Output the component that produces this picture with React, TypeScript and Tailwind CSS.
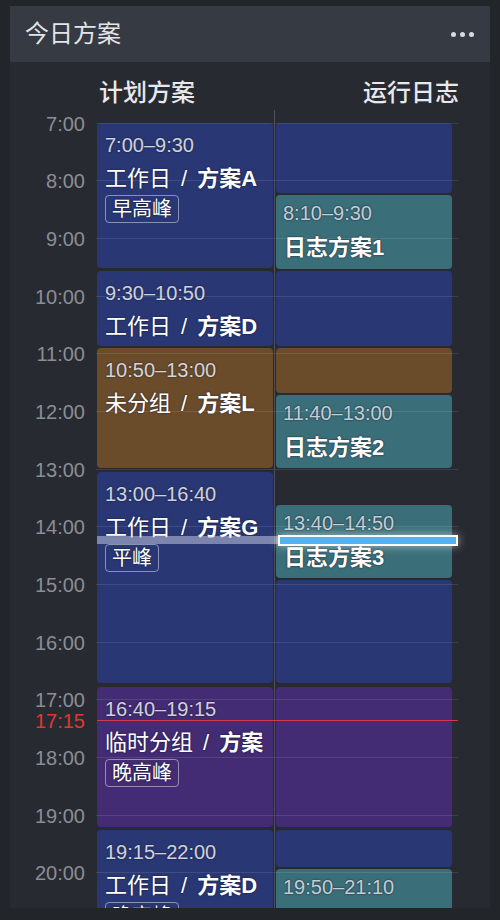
import React from 'react';

const HOUR = 57.67;
const OFFSET = 12.7;

const hours = [7, 8, 9, 10, 11, 12, 13, 14, 15, 16, 17, 18, 19, 20];

type Plan = {
  top: number;
  height: number;
  color: string;
  time?: string;
  group?: string;
  name?: string;
  tag?: string;
};

const BLUE = 'bg-[#293874]';
const BROWN = 'bg-[#6a4c2b]';
const PURPLE = 'bg-[#432c73]';
const TEAL = 'bg-[#3a6f7a]';

const plans: Plan[] = [
  { top: 13.3, height: 144.4, color: BLUE, time: '7:00–9:30', group: '工作日', name: '方案A', tag: '早高峰' },
  { top: 160.7, height: 75.3, color: BLUE, time: '9:30–10:50', group: '工作日', name: '方案D' },
  { top: 238.3, height: 120, color: BROWN, time: '10:50–13:00', group: '未分组', name: '方案L' },
  { top: 361.7, height: 211, color: BLUE, time: '13:00–16:40', group: '工作日', name: '方案G', tag: '平峰' },
  { top: 576.7, height: 140.6, color: PURPLE, time: '16:40–19:15', group: '临时分组', name: '方案', tag: '晚高峰' },
  { top: 720, height: 160, color: BLUE, time: '19:15–22:00', group: '工作日', name: '方案D', tag: '晚高峰' },
];

type Log = { top: number; height: number; color: string; time?: string; name?: string };

const logs: Log[] = [
  { top: 13.3, height: 70, color: BLUE },
  { top: 85.3, height: 73.4, color: TEAL, time: '8:10–9:30', name: '日志方案1' },
  { top: 161, height: 75, color: BLUE },
  { top: 237.7, height: 45.6, color: BROWN },
  { top: 285, height: 73.3, color: TEAL, time: '11:40–13:00', name: '日志方案2' },
  { top: 394.5, height: 73.8, color: TEAL, time: '13:40–14:50', name: '日志方案3' },
  { top: 469.5, height: 103, color: BLUE },
  { top: 576.7, height: 140.6, color: PURPLE },
  { top: 720, height: 36.7, color: BLUE },
  { top: 758.7, height: 80, color: TEAL, time: '19:50–21:10', name: '日志方案4' },
];

const shadow = '[text-shadow:0_0_2px_rgba(8,12,40,0.85)]';

function PlanBlock({ p }: { p: Plan }) {
  return (
    <div
      className={`absolute left-[87px] w-[176px] rounded-[4px] overflow-hidden ${p.color} pl-[8px] pt-[10px]`}
      style={{ top: p.top, height: p.height }}
    >
      <div className={`text-[20px] leading-[24px] text-white/80 whitespace-nowrap ${shadow}`}>{p.time}</div>
      <div className={`mt-[8px] text-[22px] leading-[28px] text-white whitespace-nowrap ${shadow}`}>
        <span className="font-normal">{p.group}</span>
        <span className="mx-[10px]">/</span>
        <span className="font-bold">{p.name}</span>
      </div>
      {p.tag && (
        <div className="mt-[2px] flex">
          <span className={`border border-white/45 rounded-[4px] px-[6px] text-[20px] leading-[26px] text-white ${shadow}`}>
            {p.tag}
          </span>
        </div>
      )}
    </div>
  );
}

function LogBlock({ l }: { l: Log }) {
  return (
    <div
      className={`absolute left-[266px] w-[176px] rounded-[4px] overflow-hidden ${l.color} pl-[7px] pt-[6px]`}
      style={{ top: l.top, height: l.height }}
    >
      {l.time && (
        <>
          <div className={`text-[20px] leading-[24px] text-white/75 whitespace-nowrap ${shadow}`}>{l.time}</div>
          <div className={`mt-[9px] pl-px text-[22px] leading-[28px] font-bold text-white whitespace-nowrap ${shadow}`}>
            {l.name}
          </div>
        </>
      )}
    </div>
  );
}

export default function App() {
  return (
    <div className="h-[920px] overflow-hidden bg-[#222529] pt-[6px] px-[10px] font-['Liberation_Sans','Noto_Sans_CJK_SC',sans-serif]">
      <div className="h-[902px] bg-[#272a31] flex flex-col overflow-hidden">
        {/* header */}
        <div className="h-[56px] shrink-0 bg-[#363a43] flex items-center justify-between pl-[15px] pr-[16px]">
          <span className="text-[24px] leading-[32px] text-[#e4e5e8]">今日方案</span>
          <div className="flex items-center gap-[4px]">
            <span className="w-[5px] h-[5px] rounded-full bg-[#d9dadd]" />
            <span className="w-[5px] h-[5px] rounded-full bg-[#d9dadd]" />
            <span className="w-[5px] h-[5px] rounded-full bg-[#d9dadd]" />
          </div>
        </div>

        {/* column titles */}
        <div className="h-[48px] shrink-0 pt-[14px] flex items-center justify-between pl-[89px] pr-[31px]">
          <span className="text-[24px] leading-[32px] font-medium text-[#e8e9ec]">计划方案</span>
          <span className="text-[24px] leading-[32px] font-medium text-[#e8e9ec]">运行日志</span>
        </div>

        {/* timeline */}
        <div className="relative flex-1 overflow-hidden">
          {hours.map((h, i) => (
            <div
              key={h}
              className="absolute left-0 w-[75px] text-right text-[20px] leading-[24px] text-[#8b8e95]"
              style={{ top: OFFSET + i * HOUR - 11 }}
            >
              {h}:00
            </div>
          ))}
          <div className="absolute left-0 w-[75px] top-[599px] text-right text-[20px] leading-[24px] text-[#e2362c]">
            17:15
          </div>

          {plans.map((p, i) => (
            <PlanBlock key={i} p={p} />
          ))}
          {logs.map((l, i) => (
            <LogBlock key={i} l={l} />
          ))}

          {/* grid lines over blocks */}
          {hours.map((h, i) => (
            <div
              key={h}
              className="absolute left-[86px] w-[362px] h-px bg-white/10"
              style={{ top: OFFSET + i * HOUR }}
            />
          ))}
          <div className="absolute left-[264px] top-0 bottom-0 w-px bg-[#4d5058]" />

          {/* current time */}
          <div className="absolute left-[87px] w-[361px] top-[610px] h-px bg-[#d23a48]" />

          {/* drag indicator */}
          <div className="absolute left-[87px] w-[182px] top-[425.7px] h-[8px] bg-[rgba(205,210,230,0.5)]" />
          <div className="absolute left-[268px] w-[180px] top-[425px] h-[11px] border-2 border-white bg-[#56b2ee] shadow-[0_0_10px_rgba(255,255,255,0.55)]" />
        </div>
      </div>
    </div>
  );
}
